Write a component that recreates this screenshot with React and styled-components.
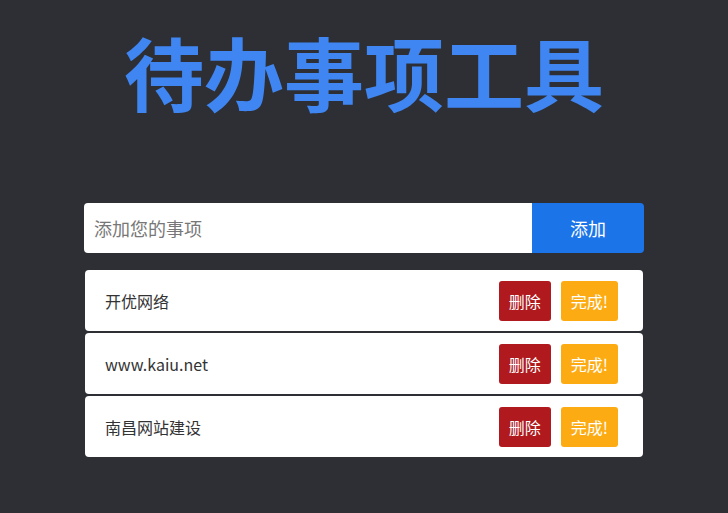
import React, { useState } from 'react';
import styled, { createGlobalStyle } from 'styled-components';

const GlobalStyle = createGlobalStyle`
  html, body {
    margin: 0;
    padding: 0;
    background: #2d2f34;
  }
  body {
    font-family: "Liberation Sans", "Noto Sans CJK SC", sans-serif;
  }
`;

const Page = styled.div`
  min-height: 513px;
  display: flex;
  flex-direction: column;
  align-items: center;
`;

const Title = styled.h1`
  margin: 12px 0 0;
  font-size: 80px;
  line-height: 116px;
  font-weight: 700;
  color: #3f86f2;
  font-family: "Noto Sans CJK SC", sans-serif;
  letter-spacing: 0;
`;

const Wrap = styled.div`
  width: 560px;
  margin-top: 75px;
`;

const Form = styled.form`
  display: flex;
  height: 50px;
  border-radius: 4px;
  overflow: hidden;
`;

const Input = styled.input`
  flex: 1;
  border: none;
  outline: none;
  padding: 0 10px;
  font-size: 18px;
  font-family: "Noto Sans CJK SC", sans-serif;
  color: #333;
  background: #fff;
  &::placeholder {
    color: #777;
  }
`;

const AddButton = styled.button`
  width: 112px;
  border: none;
  background: #1c74e9;
  color: #fff;
  font-size: 18px;
  font-family: "Noto Sans CJK SC", sans-serif;
  cursor: pointer;
`;

const List = styled.ul`
  list-style: none;
  margin: 17px 1px 0;
  padding: 0;
  display: flex;
  flex-direction: column;
  gap: 2px;
`;

const Item = styled.li`
  height: 61px;
  background: #fff;
  border-radius: 4px;
  display: flex;
  align-items: center;
  padding: 0 25px 0 20px;
  font-size: 16px;
  color: #333;
  font-family: "Noto Sans CJK SC", sans-serif;
`;

const ItemText = styled.span`
  flex: 1;
  text-decoration: ${(p) => (p.done ? 'line-through' : 'none')};
`;

const ActionButton = styled.button`
  height: 40px;
  padding: 0 10px;
  margin-left: ${(p) => (p.first ? '0' : '10px')};
  border: none;
  border-radius: 3px;
  background: ${(p) => p.bg};
  color: #fff;
  font-size: 16px;
  font-family: "Noto Sans CJK SC", sans-serif;
  cursor: pointer;
`;

const initial = [
  { id: 1, text: '开优网络', done: false },
  { id: 2, text: 'www.kaiu.net', done: false },
  { id: 3, text: '南昌网站建设', done: false },
];

export default function App() {
  const [todos, setTodos] = useState(initial);
  const [value, setValue] = useState('');

  const add = (e) => {
    e.preventDefault();
    if (!value.trim()) return;
    setTodos([...todos, { id: Date.now(), text: value, done: false }]);
    setValue('');
  };

  return (
    <Page>
      <GlobalStyle />
      <Title>待办事项工具</Title>
      <Wrap>
        <Form onSubmit={add}>
          <Input
            placeholder="添加您的事项"
            value={value}
            onChange={(e) => setValue(e.target.value)}
          />
          <AddButton type="submit">添加</AddButton>
        </Form>
        <List>
          {todos.map((t) => (
            <Item key={t.id}>
              <ItemText done={t.done}>{t.text}</ItemText>
              <ActionButton
                first
                bg="#b0191d"
                onClick={() => setTodos(todos.filter((x) => x.id !== t.id))}
              >
                删除
              </ActionButton>
              <ActionButton
                bg="#fdab12"
                onClick={() =>
                  setTodos(todos.map((x) => (x.id === t.id ? { ...x, done: !x.done } : x)))
                }
              >
                完成!
              </ActionButton>
            </Item>
          ))}
        </List>
      </Wrap>
    </Page>
  );
}
